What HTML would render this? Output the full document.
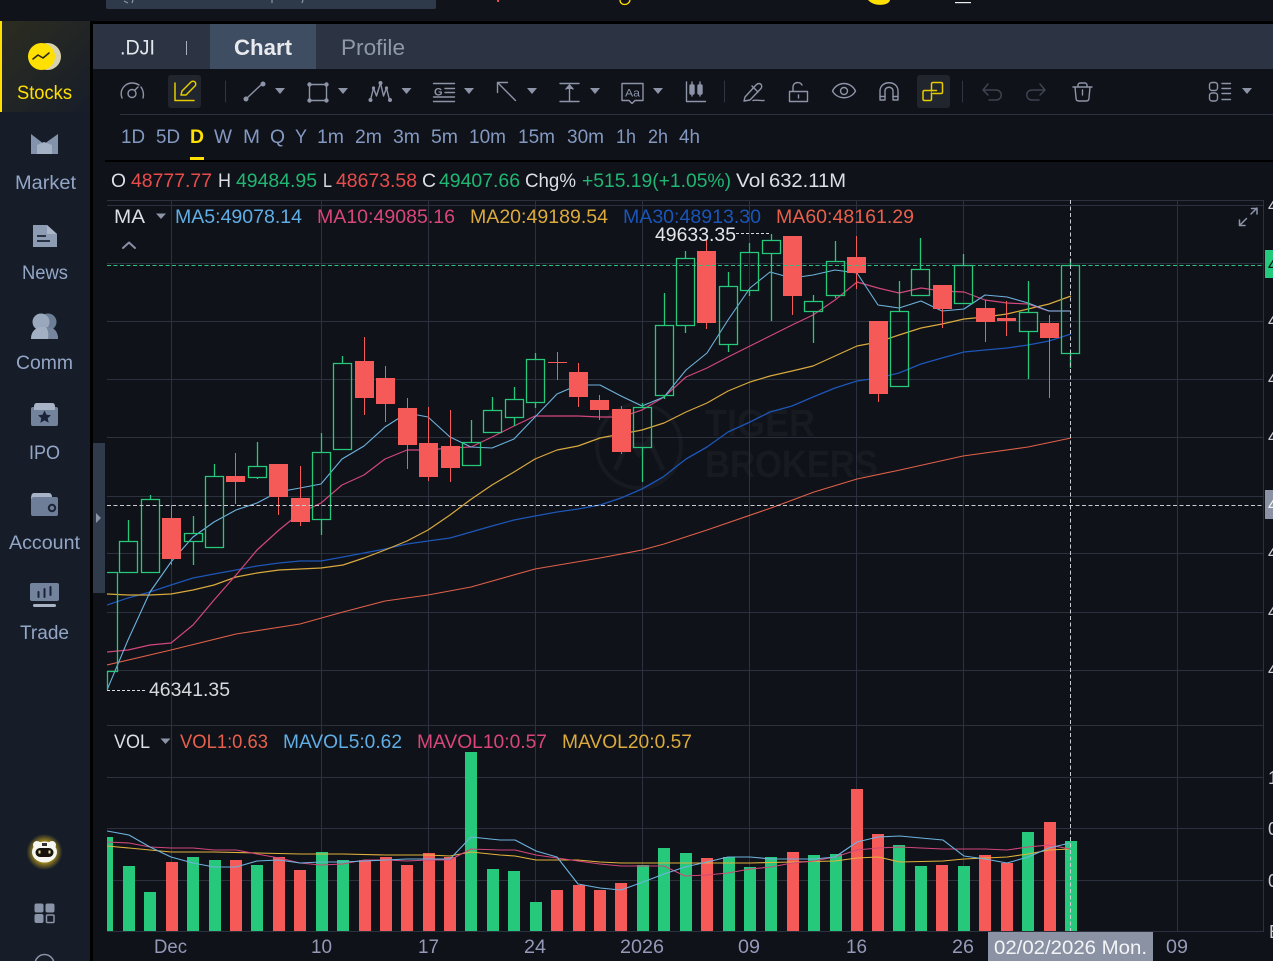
<!DOCTYPE html>
<html><head><meta charset="utf-8"><style>
html,body{margin:0;padding:0;background:#0f1218;width:1273px;height:961px;overflow:hidden}
svg{display:block;font-family:"Liberation Sans",sans-serif}
text{white-space:pre}
</style></head><body>
<svg width="1273" height="961" viewBox="0 0 1273 961" xmlns="http://www.w3.org/2000/svg">
<defs>
<linearGradient id="act" x1="0" x2="1" y1="0" y2="1"><stop offset="0" stop-color="#2c2d20"/><stop offset="1" stop-color="#171d29"/></linearGradient>
<radialGradient id="glow"><stop offset=".6" stop-color="#c9a81c" stop-opacity=".75"/><stop offset="1" stop-color="#c9a81c" stop-opacity="0"/></radialGradient>
<clipPath id="plot"><rect x="107" y="200" width="1157" height="732"/></clipPath>
</defs>
<rect width="1273" height="961" fill="#0f1218"/>
<!-- top bar -->
<rect width="1273" height="21" fill="#10141a"/>
<rect x="106" y="-5" width="330" height="14" rx="2" fill="#2e3a4a"/>
<path d="M124 1l4 2M133 0l-1 3M272 0v3M303 0l-1 3" stroke="#8b95a5" stroke-width="1.2" fill="none"/>
<rect x="497" y="0" width="2" height="2" fill="#e84c4c"/>
<path d="M620 0c0 6 9 6 10 0" stroke="#ffe000" stroke-width="1.3" fill="none"/>
<path d="M868 0h22c-1 6-16 7-22 0z" fill="#ffe000"/>
<rect x="955" y="2" width="16" height="1.2" fill="#eee"/>
<rect y="21" width="1273" height="3" fill="#000"/>
<!-- sidebar -->
<rect y="21" width="90" height="940" fill="#161d29"/>
<rect x="90" y="21" width="3" height="940" fill="#000"/>
<rect y="21" width="90" height="91" fill="url(#act)"/>
<rect y="21" width="2" height="91" fill="#ffe000"/>
<circle cx="47.500" cy="56.500" r="13.500" fill="#d6d2b0"/>
<circle cx="41.500" cy="56.500" r="13.500" fill="#ffe000"/>
<path d="M33 59l5-4 5 3 6-5" stroke="#2a2a18" stroke-width="1.6" fill="none" stroke-linecap="round" stroke-linejoin="round"/>
<text x="17" y="99" font-size="19" fill="#ffe000" textLength="55" lengthAdjust="spacingAndGlyphs">Stocks</text>
<path d="M31 134l13 10 14-10v20H31z" fill="#8493ac"/><path d="M37 154v-9l7-3 8 3v9z" fill="#a4b0c4"/>
<text x="15" y="189" font-size="19" fill="#93a6c6" textLength="61" lengthAdjust="spacingAndGlyphs">Market</text>
<path d="M33 225h14l10 9v13H33z" fill="#8d9bb3"/><path d="M47 225l10 9H47z" fill="#aab5c8"/><path d="M37 235h9v2h-9zM37 240h13v2H37z" fill="#2a3346"/>
<text x="22" y="279" font-size="19" fill="#93a6c6" textLength="46" lengthAdjust="spacingAndGlyphs">News</text>
<circle cx="48" cy="322" r="8.500" fill="#6c7d96"/><circle cx="41" cy="322" r="8.500" fill="#9aa8be"/><path d="M31 339c0-9 6-12 13-12s14 3 14 12z" fill="#a3b0c4"/><path d="M46 327c7 0 12 3 12 12H48c1-5 0-9-2-12z" fill="#76869e"/>
<text x="16" y="369" font-size="19" fill="#93a6c6" textLength="57" lengthAdjust="spacingAndGlyphs">Comm</text>
<rect x="31" y="407" width="27" height="19" rx="2" fill="#74839c"/><path d="M34 407c0-3 1-4 3-4h15c2 0 3 1 3 4v3H34z" fill="#a8b3c6"/><path d="M44.500 410.500l2 4.200 4.500.5-3.300 3 1 4.600-4.200-2.400-4.200 2.400 1-4.600-3.300-3 4.500-.5z" fill="#1c2338"/>
<text x="29" y="459" font-size="19" fill="#93a6c6" textLength="31" lengthAdjust="spacingAndGlyphs">IPO</text>
<rect x="31" y="497" width="27" height="19" rx="2" fill="#6e7e98"/><path d="M31 499c0-4 1-6 3-6h15c2 0 3 2 3 4H33z" fill="#a8b3c6"/><circle cx="52" cy="508" r="3.200" fill="none" stroke="#1c2338" stroke-width="2"/>
<text x="9" y="549" font-size="19" fill="#93a6c6" textLength="71" lengthAdjust="spacingAndGlyphs">Account</text>
<rect x="30" y="583" width="29" height="18" rx="2" fill="#74839c"/><path d="M38.500 592v5M44.500 589v8M50.500 587v8" stroke="#1c2338" stroke-width="2" stroke-linecap="round"/><rect x="33" y="604" width="23" height="3" rx="1.500" fill="#a8b3c6"/>
<text x="20" y="639" font-size="19" fill="#93a6c6" textLength="49" lengthAdjust="spacingAndGlyphs">Trade</text>
<circle cx="44.500" cy="852" r="18" fill="url(#glow)"/>
<circle cx="37" cy="845" r="4" fill="#f4f4f0"/><circle cx="52" cy="845" r="4" fill="#f4f4f0"/>
<ellipse cx="44.500" cy="852" rx="12.500" ry="10.500" fill="#f7f7f2"/>
<rect x="35.500" y="848" width="18" height="9" rx="4.500" fill="#16130c"/><rect x="38.500" y="850.500" width="2" height="3" fill="#e8dca0"/><rect x="48.500" y="850.500" width="2" height="3" fill="#e8dca0"/><rect x="42" y="843" width="5" height="3" fill="#333"/>
<rect x="34.500" y="903.500" width="9" height="9" rx="2" fill="#8a94a8"/><rect x="45.500" y="903.500" width="9" height="9" rx="2" fill="#8a94a8"/><rect x="34.500" y="914" width="9" height="9" rx="2" fill="#8a94a8"/><rect x="46.500" y="915" width="7.500" height="7.500" rx="1" fill="none" stroke="#8a94a8" stroke-width="1.500"/>
<circle cx="44.500" cy="964" r="9.500" fill="none" stroke="#8a94a8" stroke-width="1.500"/>
<!-- tabs -->
<rect x="93" y="24" width="1180" height="45" fill="#2c3343"/>
<rect x="210" y="24" width="106" height="45" fill="#3f4d62"/>
<text x="120" y="54.500" font-size="21" fill="#e4e7ec" textLength="35" lengthAdjust="spacingAndGlyphs">.DJI</text>
<rect x="186" y="41" width="1" height="14" fill="#a9b0bd"/>
<text x="234" y="55" font-size="22" font-weight="bold" fill="#e8eaee" textLength="58" lengthAdjust="spacingAndGlyphs">Chart</text>
<text x="341" y="55" font-size="22" fill="#8e99aa" textLength="64" lengthAdjust="spacingAndGlyphs">Profile</text>
<!-- toolbar -->
<rect x="168" y="75" width="33" height="33" rx="3" fill="#21252d"/>
<rect x="917" y="75" width="33" height="33" rx="3" fill="#21252d"/>
<g fill="none" stroke="#8d94a8" stroke-width="1.400" stroke-linecap="round" stroke-linejoin="round">
<path d="M122 98c-3-8 3-15 10-15 3 0 5 .8 7 2M141 87c2 3 3 7 2 11"/><circle cx="132" cy="93.500" r="4"/><path d="M135 90l3-3"/>
<path d="M225.500 81v21M724.500 81v21M962.500 81v21" stroke="#2f3542" stroke-width="1"/>
<path d="M247 98l15-14"/>
<path d="M309.500 84.500h17v16h-17z"/>
<path d="M370.500 100l3-12 3 8 4-13 3 13 3-8 3 12"/>
<path d="M433.500 83.500h21M445 88.500h9.500M445 92.500h9.500M433.500 97h21M433.500 101.500h21"/>
<path d="M497.500 82.500l18 18M497.500 82.500v10M497.500 82.500h10"/>
<path d="M560 83.500h19M560 101.500h19M569.500 89v12M566 89l3.500-4 3.500 4"/>
<path d="M622 83.500h21v17h-8l-3 3-3-3h-7z"/>
<path d="M686.500 82v19.500h19M692 82v14M700 82v14"/><rect x="690" y="85" width="4" height="9" rx="1" fill="#8d94a8"/><rect x="698" y="85" width="4" height="9" rx="1" fill="#8d94a8"/>
<path d="M745 97l11-12c1.500-1.500 3-2 4.500-1s1.500 3 .5 4.500l-11 11.500-6 1zM752 86l6 6M753 100.500c3-1 6 .5 11 0"/>
<path d="M789.500 91.500h18v10h-18zM793 91v-4c0-5 7-6 9-2"/><path d="M798.500 95v3"/>
<path d="M832.500 91c5-10 18-10 23 0-5 9-18 9-23 0z"/><circle cx="844" cy="91" r="3.500"/>
<path d="M880 100V91c0-11 18-11 18 0v9h-5V91c0-5-8-5-8 0v9z"/><path d="M880 96.500h5M893 96.500h5"/>
<path d="M1073 87h19M1078 87v-2c0-1 1-2 2-2h5c1 0 2 1 2 2v2M1075 87l1 11c0 2 1 3 3 3h7c2 0 3-1 3-3l1-11M1082.500 90v5"/>
<rect x="1209.500" y="82.500" width="8" height="8" rx="2.500"/><rect x="1209.500" y="93" width="8" height="8" rx="2.500"/>
<path d="M1222 83.500h8.500M1222 88.500h8.500M1222 93.500h8.500M1222 99.500h8.500"/>
<path d="M1239.500 225.500l7-7M1251 214l6-6M1251.500 208.500h5.500v5.500M1239.500 220v5.500h5.500" stroke-width="1.500"/>
<path d="M123 248l6-5.500 6 5.500" stroke="#878ea6" stroke-width="2"/>
</g>
<g fill="none" stroke="#3d4350" stroke-width="1.500" stroke-linecap="round" stroke-linejoin="round">
<path d="M983 90h13c7 0 7 10 0 10h-7M988 84l-5 6 5 5"/>
<path d="M1045 90h-13c-7 0-7 10 0 10h7M1040 84l5 6-5 5"/>
</g>
<g fill="#8d94a8">
<circle cx="246" cy="99" r="2.500"/><circle cx="263" cy="84" r="2.500"/>
<circle cx="309.500" cy="84.500" r="2.200"/><circle cx="326.500" cy="84.500" r="2.200"/><circle cx="309.500" cy="100.500" r="2.200"/><circle cx="326.500" cy="100.500" r="2.200"/>
<circle cx="370.500" cy="100" r="2"/><circle cx="373.500" cy="88" r="1.600"/><circle cx="380.500" cy="83" r="2"/><circle cx="386.500" cy="88" r="1.600"/><circle cx="390" cy="100" r="2"/>
<path d="M275 88h10l-5 6zM338 88h10l-5 6zM401.500 88h10l-5 6zM464 88h10l-5 6zM527 88h10l-5 6zM590 88h10l-5 6zM653 88h10l-5 6zM1242 88h10l-5 6zM156 213.500h10l-5 5.500zM160.500 738.500h10l-5 5.500z"/>
<path d="M566 89l3.500-4 3.500 4z"/>
</g>
<text x="434" y="95.500" font-size="11" font-weight="bold" fill="#8d94a8">G</text>
<text x="625" y="96.500" font-size="11" fill="#8d94a8" textLength="15" lengthAdjust="spacingAndGlyphs">Aa</text>
<g fill="none" stroke="#e6cb00" stroke-width="1.500" stroke-linecap="round" stroke-linejoin="round">
<path d="M175 83v17.500h19M181 95l1-4 9-9c1-1 3-1 4 0s1 3 0 4l-9 9z"/>
<path d="M931.500 91v-7c0-1 .5-1.500 1.500-1.500h8c1 0 1.500.5 1.500 1.500v8c0 1-.5 1.500-1.500 1.500h-8M931.500 93V99c0 1-.5 1.500-1.500 1.500h-5.500c-1 0-1.500-.5-1.500-1.500v-7c0-1 .5-1.500 1.500-1.500h12"/>
</g>
<rect x="120" y="114" width="1153" height="1" fill="#2b3140"/>
<!-- periods -->
<g font-size="19" fill="#8399c2">
<text x="121" y="143" textLength="24" lengthAdjust="spacingAndGlyphs">1D</text>
<text x="156" y="143" textLength="24" lengthAdjust="spacingAndGlyphs">5D</text>
<text x="190" y="143" font-weight="bold" fill="#ffe000" textLength="14" lengthAdjust="spacingAndGlyphs">D</text>
<text x="214" y="143" textLength="18" lengthAdjust="spacingAndGlyphs">W</text>
<text x="243" y="143" textLength="17" lengthAdjust="spacingAndGlyphs">M</text>
<text x="270" y="143" textLength="15" lengthAdjust="spacingAndGlyphs">Q</text>
<text x="295" y="143" textLength="12" lengthAdjust="spacingAndGlyphs">Y</text>
<text x="317" y="143" textLength="27" lengthAdjust="spacingAndGlyphs">1m</text>
<text x="355" y="143" textLength="27" lengthAdjust="spacingAndGlyphs">2m</text>
<text x="393" y="143" textLength="27" lengthAdjust="spacingAndGlyphs">3m</text>
<text x="431" y="143" textLength="27" lengthAdjust="spacingAndGlyphs">5m</text>
<text x="469" y="143" textLength="37" lengthAdjust="spacingAndGlyphs">10m</text>
<text x="518" y="143" textLength="37" lengthAdjust="spacingAndGlyphs">15m</text>
<text x="567" y="143" textLength="37" lengthAdjust="spacingAndGlyphs">30m</text>
<text x="616" y="143" textLength="20" lengthAdjust="spacingAndGlyphs">1h</text>
<text x="648" y="143" textLength="20" lengthAdjust="spacingAndGlyphs">2h</text>
<text x="679" y="143" textLength="21" lengthAdjust="spacingAndGlyphs">4h</text>
</g>
<rect x="190" y="157" width="14" height="3" fill="#ffe000"/>
<rect x="105" y="160" width="1168" height="2" fill="#000"/>
<!-- ohlc -->
<g font-size="19">
<text x="111" y="187" fill="#dcdfe4" textLength="15" lengthAdjust="spacingAndGlyphs">O</text>
<text x="131" y="187" fill="#e84c4c" textLength="81" lengthAdjust="spacingAndGlyphs">48777.77</text>
<text x="218" y="187" fill="#dcdfe4" textLength="13" lengthAdjust="spacingAndGlyphs">H</text>
<text x="236" y="187" fill="#20b673" textLength="81" lengthAdjust="spacingAndGlyphs">49484.95</text>
<text x="323" y="187" fill="#dcdfe4" textLength="9" lengthAdjust="spacingAndGlyphs">L</text>
<text x="336" y="187" fill="#e84c4c" textLength="81" lengthAdjust="spacingAndGlyphs">48673.58</text>
<text x="422" y="187" fill="#dcdfe4" textLength="14" lengthAdjust="spacingAndGlyphs">C</text>
<text x="439" y="187" fill="#20b673" textLength="81" lengthAdjust="spacingAndGlyphs">49407.66</text>
<text x="525" y="187" fill="#dcdfe4" textLength="51" lengthAdjust="spacingAndGlyphs">Chg%</text>
<text x="582" y="187" fill="#20b673" textLength="149" lengthAdjust="spacingAndGlyphs">+515.19(+1.05%)</text>
<text x="736" y="187" fill="#dcdfe4" textLength="29" lengthAdjust="spacingAndGlyphs">Vol</text>
<text x="769" y="187" fill="#dcdfe4" textLength="77" lengthAdjust="spacingAndGlyphs">632.11M</text>
</g>
<!-- scroll handle -->
<rect x="93" y="443" width="12" height="150" fill="#2f3a4b"/>
<path d="M96 513l5 5-5 5z" fill="#8d94a8"/>
<!-- watermark -->
<g fill="#171a20">
<text x="705" y="436" font-size="38" font-weight="bold" textLength="110" lengthAdjust="spacingAndGlyphs">TIGER</text>
<text x="705" y="477" font-size="38" font-weight="bold" textLength="173" lengthAdjust="spacingAndGlyphs">BROKERS</text>
</g>
<circle cx="639" cy="446" r="42" fill="none" stroke="#171a20" stroke-width="4"/>
<path d="M615 470l14-30 10 14 10-14 14 30M628 445h22" fill="none" stroke="#171a20" stroke-width="5"/>
<!-- grid -->
<g stroke="#2b313d" stroke-width="1" fill="none">
<path d="M107 200.500H1264M107 205.500H1264M107 263.500H1264M107 321.500H1264M107 379.500H1264M107 437.500H1264M107 496.500H1264M107 553.500H1264M107 612.500H1264M107 670.500H1264M107 725.500H1264M107 777.500H1264M107 828.500H1264M107 880.500H1264M107 931.500H1264"/>
<path d="M171.500 200V931M321.500 200V931M428.500 200V931M535.500 200V931M642.500 200V931M749.500 200V931M856.500 200V931M963.500 200V931M1177.500 200V931M1263.500 200V931"/>
</g>
<!-- MA lines -->
<g fill="none" clip-path="url(#plot)" stroke-width="1.100" stroke-linejoin="round">
<polyline stroke="#e0604a" points="107,665 171,650 236,634 300,624 343,612 385,601 428,595 471,587 535,569 600,558 642,550 664,544 707,530 771,508 814,492 857,479 900,470 963,456 1028,447 1071,438"/>
<polyline stroke="#1d56b8" stroke-width="1.300" points="107,605 128,598 150,592 171,585 193,578 214,574 236,570 257,566 279,563 300,561 321,561 343,557 364,553 385,549 407,544 428,541 450,538 471,532 492,526 514,520 535,516 557,512 578,509 600,505 621,498 642,489 663,477 686,459 707,447 728,432 750,422 770,412 792,406 813,397 835,388 857,381 878,378 899,373 921,364 942,358 964,352 985,350 1007,348 1028,345 1049,341 1071,334"/>
<polyline stroke="#d8a93e" stroke-width="1.200" points="107,594 128,595 150,595 171,594 193,590 214,585 236,577 257,573 279,570 300,569 321,568 343,565 364,558 385,550 407,541 428,530 450,515 470,500 492,485 514,472 535,459 557,450 578,446 600,438 621,434 642,430 664,423 686,412 707,403 728,391 750,382 770,376 792,371 813,366 835,356 857,346 878,342 899,335 921,328 942,324 964,319 985,317 1007,314 1028,309 1049,304 1071,296"/>
<polyline stroke="#d2477b" stroke-width="1.200" points="107,652 128,650 150,645 171,643 193,625 214,600 236,575 257,550 279,530 300,513 321,503 342,485 364,475 385,459 407,450 428,450 450,448 471,447 492,437 514,426 535,416 557,416 578,416 600,417 621,417 642,410 664,397 686,377 707,368 728,357 750,346 770,336 792,325 813,315 835,300 857,282 878,288 899,293 921,288 942,291 964,292 985,300 1007,303 1028,304 1049,311 1071,311"/>
<polyline stroke="#6db3df" stroke-width="1.100" points="107,690 128,640 150,592 171,562 193,537 214,522 236,510 257,503 278,492 300,488 321,484 342,459 364,446 385,427 407,413 428,417 450,437 471,447 492,448 514,439 535,417 557,394 578,385 600,385 621,396 642,406 664,397 686,370 707,353 728,320 750,288 770,272 792,278 813,275 835,270 857,273 878,305 899,308 921,301 942,311 964,309 985,295 1007,297 1028,303 1049,311 1071,311"/>
</g>
<!-- red candles -->
<g fill="#f55a58">
<rect x="162" y="518" width="19" height="41"/><rect x="171" y="505" width="1" height="60"/>
<rect x="226" y="476" width="19" height="6"/><rect x="235" y="453" width="1" height="51"/>
<rect x="269" y="464" width="19" height="33"/><rect x="278" y="464" width="1" height="51"/>
<rect x="291" y="498" width="19" height="24"/><rect x="300" y="466" width="1" height="60"/>
<rect x="355" y="361" width="19" height="37"/><rect x="364" y="337" width="1" height="78"/>
<rect x="376" y="378" width="19" height="26"/><rect x="385" y="366" width="1" height="56"/>
<rect x="398" y="408" width="19" height="37"/><rect x="407" y="398" width="1" height="71"/>
<rect x="419" y="443" width="19" height="34"/><rect x="428" y="407" width="1" height="74"/>
<rect x="441" y="446" width="19" height="22"/><rect x="450" y="410" width="1" height="72"/>
<rect x="548" y="362" width="19" height="1"/><rect x="557" y="352" width="1" height="28"/>
<rect x="569" y="372" width="19" height="25"/><rect x="578" y="363" width="1" height="44"/>
<rect x="590" y="400" width="19" height="10"/><rect x="599" y="395" width="1" height="25"/>
<rect x="612" y="409" width="19" height="43"/><rect x="621" y="406" width="1" height="48"/>
<rect x="697" y="251" width="19" height="72"/><rect x="706" y="240" width="1" height="89"/>
<rect x="783" y="236" width="19" height="60"/><rect x="792" y="236" width="1" height="79"/>
<rect x="847" y="257" width="19" height="16"/><rect x="856" y="236" width="1" height="53"/>
<rect x="869" y="321" width="19" height="73"/><rect x="878" y="321" width="1" height="81"/>
<rect x="933" y="285" width="19" height="24"/><rect x="942" y="285" width="1" height="43"/>
<rect x="976" y="308" width="19" height="14"/><rect x="985" y="300" width="1" height="42"/>
<rect x="997" y="318" width="19" height="3"/><rect x="1006" y="301" width="1" height="35"/>
<rect x="1040" y="323" width="19" height="15"/><rect x="1049" y="315" width="1" height="83"/>
</g>
<!-- green candles -->
<path fill="none" stroke="#26c97c" stroke-width="1.300" d="M107 572.500h10.500v99H107M107.500 671v19
M119.500 541.500h18v31h-18zM128.500 520v21
M141.500 499.500h18v73h-18zM150.500 495v4
M184.500 533.500h18v8h-18zM193.500 516v17M193.500 541v24
M205.500 476.500h18v71h-18zM214.500 464v12
M248.500 466.500h18v11h-18zM257.500 442v24M257.500 478v1
M312.500 452.500h18v67h-18zM321.500 433v19M321.500 520v15
M333.500 363.500h18v86h-18zM342.500 356v7
M462.500 442.500h18v23h-18zM471.500 420v22
M483.500 410.500h18v22h-18zM492.500 397v13
M505.500 399.500h18v18h-18zM514.500 387v12M514.500 418v8
M526.500 359.500h18v43h-18zM535.500 353v6M535.500 403v5
M633.500 407.500h18v40h-18zM642.500 403v4M642.500 448v34
M655.500 325.500h18v70h-18zM664.500 293v32M664.500 396v3
M676.500 258.500h18v67h-18zM685.500 251v7M685.500 326v7
M719.500 286.500h18v58h-18zM728.500 272v14M728.500 345v7
M740.500 252.500h18v38h-18zM749.500 243v9M749.500 291v5
M762.500 240.500h18v13h-18zM771.500 234v6M771.500 254v67
M804.500 301.500h18v10h-18zM813.500 295v6M813.500 312v31
M826.500 261.500h18v34h-18zM835.500 241v20M835.500 296v2
M890.500 311.500h18v75h-18zM899.500 281v30
M911.500 269.500h18v26h-18zM920.500 238v31
M954.500 265.500h18v38h-18zM963.500 254v11
M1019.500 312.500h18v19h-18zM1028.500 281v31M1028.500 332v47
M1061.500 265.500h18v88h-18zM1070.500 259v6M1070.500 354v14"/>
<!-- volume -->
<g fill="#26c97c">
<rect x="107" y="837" width="6" height="94"/><rect x="123" y="866" width="12" height="65"/><rect x="144" y="892" width="12" height="39"/><rect x="187" y="857" width="12" height="74"/><rect x="209" y="860" width="12" height="71"/><rect x="251" y="865" width="12" height="66"/><rect x="316" y="852" width="12" height="79"/><rect x="337" y="860" width="12" height="71"/><rect x="465" y="752" width="12" height="179"/><rect x="487" y="869" width="12" height="62"/><rect x="508" y="871" width="12" height="60"/><rect x="530" y="902" width="12" height="29"/><rect x="637" y="865" width="12" height="66"/><rect x="658" y="848" width="12" height="83"/><rect x="680" y="853" width="12" height="78"/><rect x="723" y="857" width="12" height="74"/><rect x="744" y="867" width="12" height="64"/><rect x="765" y="857" width="12" height="74"/><rect x="808" y="855" width="12" height="76"/><rect x="830" y="854" width="12" height="77"/><rect x="893" y="845" width="12" height="86"/><rect x="915" y="866" width="12" height="65"/><rect x="958" y="866" width="12" height="65"/><rect x="1022" y="832" width="12" height="99"/><rect x="1065" y="841" width="12" height="90"/>
</g>
<g fill="#f55a58">
<rect x="166" y="862" width="12" height="69"/><rect x="230" y="860" width="12" height="71"/><rect x="273" y="857" width="12" height="74"/><rect x="294" y="870" width="12" height="61"/><rect x="359" y="860" width="12" height="71"/><rect x="380" y="857" width="12" height="74"/><rect x="401" y="865" width="12" height="66"/><rect x="423" y="853" width="12" height="78"/><rect x="444" y="857" width="12" height="74"/><rect x="551" y="890" width="12" height="41"/><rect x="573" y="885" width="12" height="46"/><rect x="594" y="890" width="12" height="41"/><rect x="615" y="883" width="12" height="48"/><rect x="701" y="858" width="12" height="73"/><rect x="787" y="852" width="12" height="79"/><rect x="851" y="789" width="12" height="142"/><rect x="872" y="834" width="12" height="97"/><rect x="936" y="865" width="12" height="66"/><rect x="979" y="855" width="12" height="76"/><rect x="1001" y="863" width="12" height="68"/><rect x="1044" y="822" width="12" height="109"/>
</g>
<g fill="none" clip-path="url(#plot)" stroke-width="1.100" stroke-linejoin="round">
<polyline stroke="#e3b23c" points="107,846 129,848 150,850 171,852 214,852 257,853 300,854 343,854 386,855 428,855 450,856 471,852 500,855 515,856 536,860 557,860 578,860 600,862 621,863 685,863 750,863 792,862 835,861 857,858 878,857 900,862 943,861 964,859 1007,857 1028,854 1049,850 1070,849"/>
<polyline stroke="#d2477b" points="107,842 129,843 150,847 171,848 193,848 214,850 236,850 257,854 279,858 300,863 321,865 343,864 364,860 386,860 407,861 428,860 450,860 471,849 500,850 515,850 536,855 557,858 578,861 600,864 621,866 643,866 664,866 685,876 707,875 728,873 750,869 771,867 792,863 814,861 835,857 857,850 878,848 900,847 921,848 943,849 964,849 985,849 1007,850 1028,847 1049,845 1070,849"/>
<polyline stroke="#6db3df" points="107,831 129,835 150,847 171,857 193,863 214,867 236,867 257,861 279,860 300,863 321,862 343,862 364,861 386,860 407,859 428,859 450,859 471,837 500,840 515,840 536,851 557,857 578,884 600,888 621,890 643,882 664,874 685,867 707,862 728,857 750,857 771,859 792,859 814,859 835,857 857,842 878,837 900,836 921,838 943,840 964,856 985,859 1007,863 1028,857 1049,848 1070,843"/>
</g>
<!-- crosshair & dashed -->
<path d="M107 265.500H1264" stroke="#2fc184" stroke-dasharray="4 2.500" fill="none"/>
<path d="M107 505.500H1264" stroke="#c8ccd2" stroke-dasharray="4 2.500" fill="none"/>
<path d="M1070.500 200V931" stroke="#c8ccd2" stroke-dasharray="4 2.500" fill="none"/>
<path d="M736 233.500H771M107 690.500H147" stroke="#d8dade" stroke-dasharray="3 2" fill="none"/>
<!-- MA labels -->
<g font-size="19">
<text x="114" y="223" fill="#dcdfe4" textLength="31" lengthAdjust="spacingAndGlyphs">MA</text>
<text x="175" y="223" fill="#60aee6" textLength="127" lengthAdjust="spacingAndGlyphs">MA5:49078.14</text>
<text x="317" y="223" fill="#d9467a" textLength="138" lengthAdjust="spacingAndGlyphs">MA10:49085.16</text>
<text x="470" y="223" fill="#dcaa3c" textLength="138" lengthAdjust="spacingAndGlyphs">MA20:49189.54</text>
<text x="623" y="223" fill="#1a55b8" textLength="138" lengthAdjust="spacingAndGlyphs">MA30:48913.30</text>
<text x="776" y="223" fill="#e8604c" textLength="138" lengthAdjust="spacingAndGlyphs">MA60:48161.29</text>
<text x="655" y="241" fill="#e4e6ea" textLength="81" lengthAdjust="spacingAndGlyphs">49633.35</text>
<text x="149" y="696" fill="#d8dade" textLength="81" lengthAdjust="spacingAndGlyphs">46341.35</text>
<text x="114" y="748" fill="#dcdfe4" textLength="36" lengthAdjust="spacingAndGlyphs">VOL</text>
<text x="180" y="748" fill="#e8604c" textLength="88" lengthAdjust="spacingAndGlyphs">VOL1:0.63</text>
<text x="283" y="748" fill="#60aee6" textLength="119" lengthAdjust="spacingAndGlyphs">MAVOL5:0.62</text>
<text x="417" y="748" fill="#d9467a" textLength="130" lengthAdjust="spacingAndGlyphs">MAVOL10:0.57</text>
<text x="562" y="748" fill="#dcaa3c" textLength="130" lengthAdjust="spacingAndGlyphs">MAVOL20:0.57</text>
</g>
<!-- x axis -->
<g font-size="19" fill="#9499b8">
<text x="154" y="953" textLength="33" lengthAdjust="spacingAndGlyphs">Dec</text>
<text x="311" y="953" textLength="21" lengthAdjust="spacingAndGlyphs">10</text>
<text x="418" y="953" textLength="21" lengthAdjust="spacingAndGlyphs">17</text>
<text x="524" y="953" textLength="22" lengthAdjust="spacingAndGlyphs">24</text>
<text x="620" y="953" textLength="44" lengthAdjust="spacingAndGlyphs">2026</text>
<text x="738" y="953" textLength="22" lengthAdjust="spacingAndGlyphs">09</text>
<text x="846" y="953" textLength="21" lengthAdjust="spacingAndGlyphs">16</text>
<text x="952" y="953" textLength="22" lengthAdjust="spacingAndGlyphs">26</text>
<text x="1166" y="953" textLength="22" lengthAdjust="spacingAndGlyphs">09</text>
</g>
<rect x="988" y="932" width="165" height="29" fill="#8a92a3"/>
<text x="994" y="954" font-size="19.500" fill="#f4f5f7" textLength="153" lengthAdjust="spacingAndGlyphs">02/02/2026 Mon.</text>
<!-- right axis -->
<rect x="1265" y="250" width="8" height="28" fill="#26c97c"/>
<rect x="1265" y="490" width="8" height="29" fill="#8a92a3"/>
<g font-size="18" fill="#c9ccd2">
<text x="1268" y="212">4</text><text x="1268" y="327">4</text><text x="1268" y="385">4</text><text x="1268" y="443">4</text><text x="1268" y="559">4</text><text x="1268" y="618">4</text><text x="1268" y="676">4</text>
<text x="1268" y="784">1</text><text x="1268" y="835">0</text><text x="1268" y="887">0</text><text x="1269" y="938">B</text>
<text x="1268" y="271" fill="#0f1218">4</text><text x="1268" y="511" fill="#f0f0f0">4</text>
</g>
</svg>
</body></html>
